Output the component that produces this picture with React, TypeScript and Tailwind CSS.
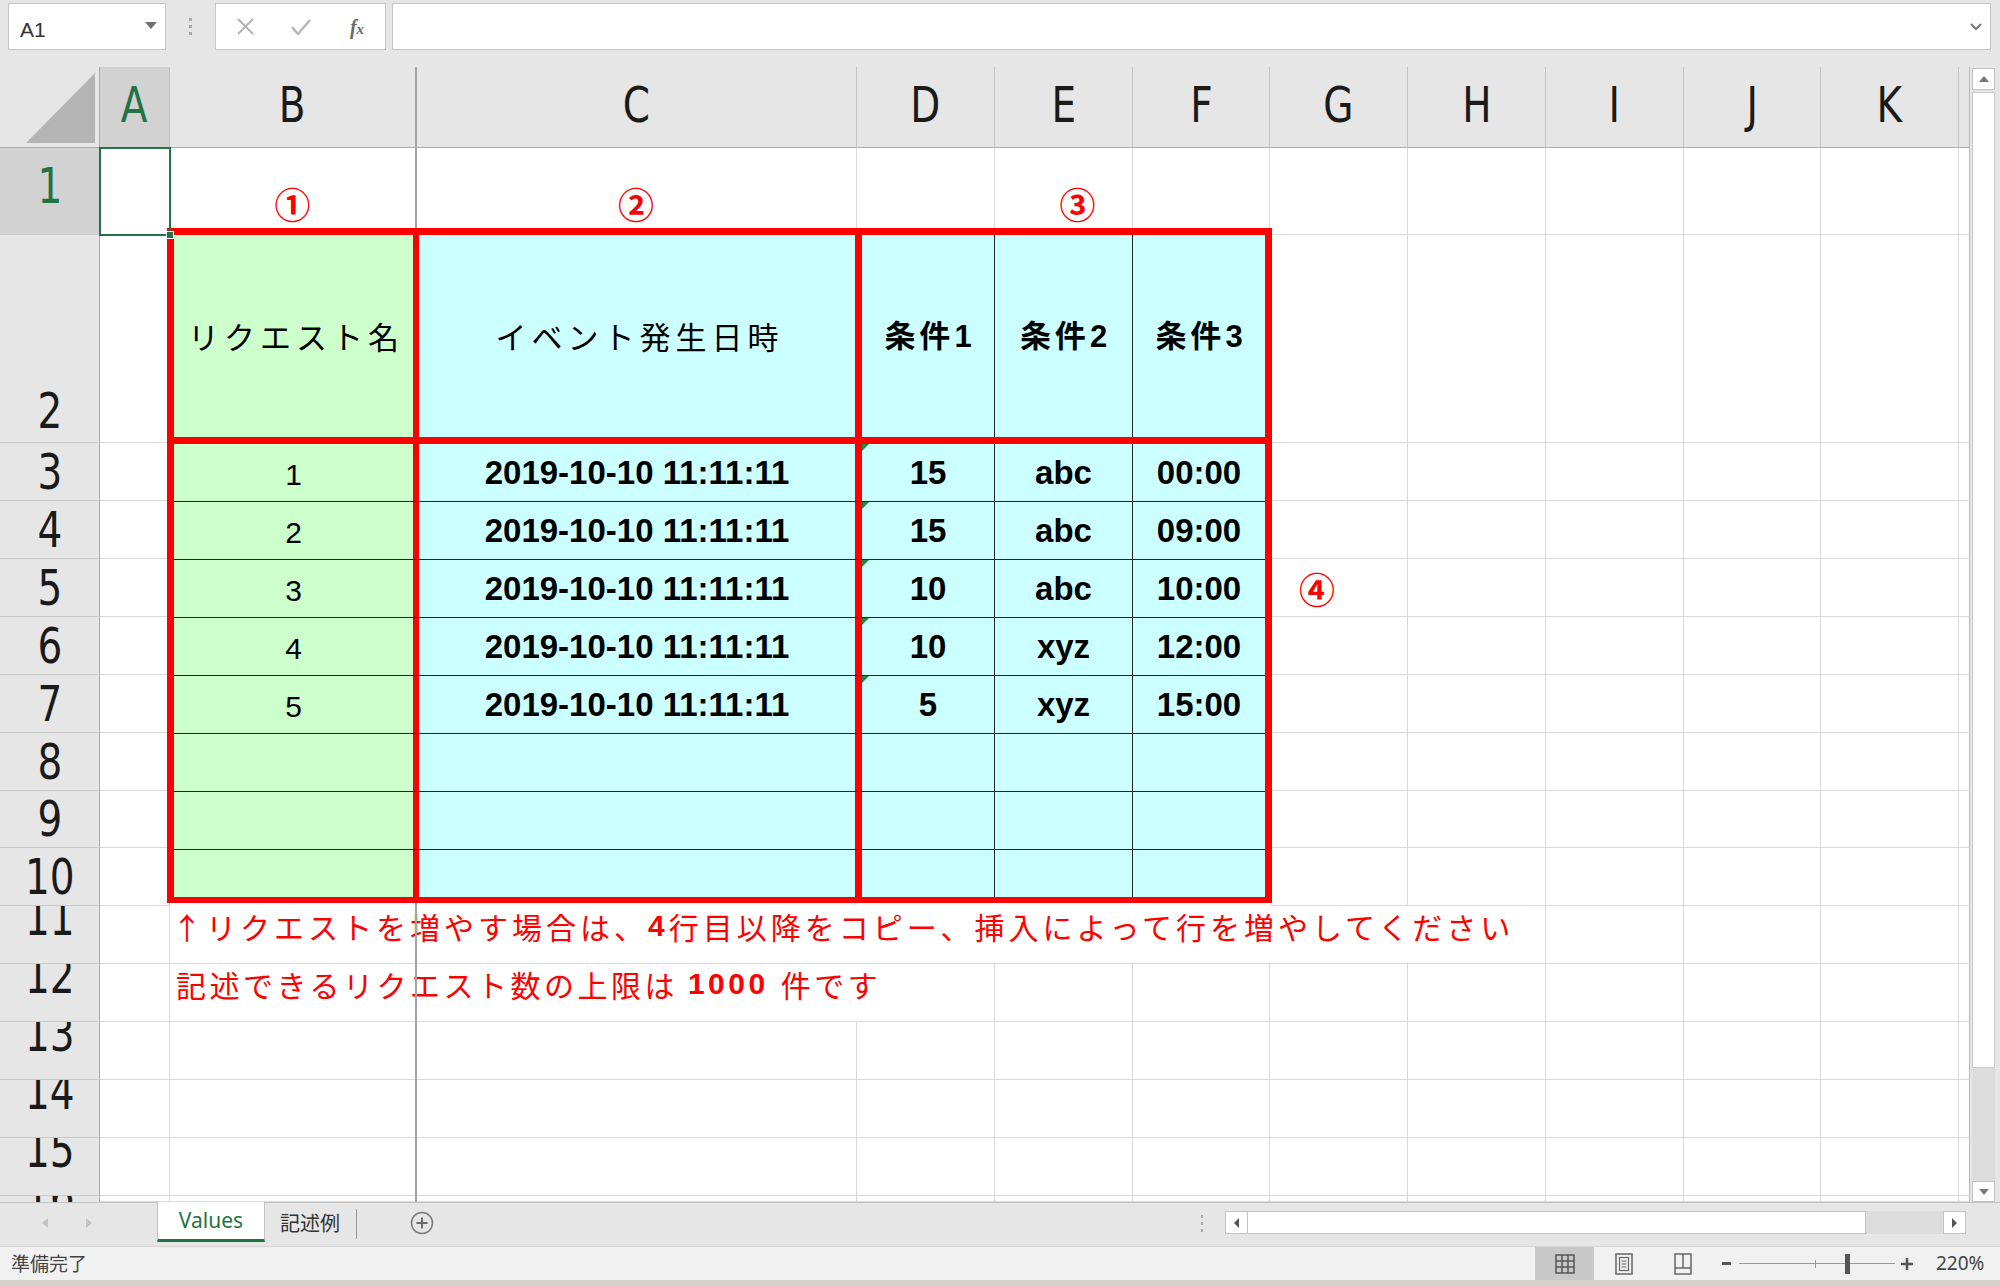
import React from "react";

const jp = "font-['Noto_Sans_CJK_JP','Noto_Sans_CJK_SC',sans-serif]";
const arial = "font-['Liberation_Sans',Arial,sans-serif]";
const dv = "font-['DejaVu_Sans','Liberation_Sans',sans-serif]";
const ui = "font-['Noto_Sans','Noto_Sans_CJK_JP',sans-serif]";

const cell = "border-r border-b border-[#d9d9d9]";
const lastCell = "border-r border-b border-[#d9d9d9] border-r-[#b9b9b9]";
const red = "text-[#ff0000]";

const letters = ["A", "B", "C", "D", "E", "F", "G", "H", "I", "J", "K"];

const data = [
    ["1", "2019-10-10 11:11:11", "15", "abc", "00:00"],
    ["2", "2019-10-10 11:11:11", "15", "abc", "09:00"],
    ["3", "2019-10-10 11:11:11", "10", "abc", "10:00"],
    ["4", "2019-10-10 11:11:11", "10", "xyz", "12:00"],
    ["5", "2019-10-10 11:11:11", "5", "xyz", "15:00"],
    ["", "", "", "", ""],
    ["", "", "", "", ""],
    ["", "", "", "", ""],
];

function HeadText({ children }: { children: React.ReactNode }) {
    return <span className={`inline-block scale-x-[0.78] text-[50px] leading-[50px] ${dv}`}>{children}</span>;
}

function RowHead({ n }: { n: number }) {
    let pos = "items-center";
    if (n === 1) pos = "items-center pb-[10px] bg-[#d2d2d2] text-[#217346]";
    else if (n === 2) pos = "items-end pb-[6px] bg-[#e6e6e6]";
    else if (n >= 11) pos = "items-center pb-[33px] bg-[#e6e6e6]";
    else pos = "items-center bg-[#e6e6e6]";
    return (
        <div className={`flex justify-center overflow-hidden border-r border-b border-r-[#a9a9a9] border-b-[#c9c9c9] text-[#1a1a1a] ${pos}`}>
            <HeadText>{n}</HeadText>
        </div>
    );
}

function Circled({ c }: { c: string }) {
    return <span className={`${jp} font-bold text-[36px] leading-[36px] ${red}`}>{c}</span>;
}

// G..K plus the partial L column
function RightCells({ row, extra }: { row: number; extra?: React.ReactNode }) {
    return (
        <>
            <div className={`${cell} flex items-center pl-[29px]`}>{extra}</div>
            <div className={cell} />
            <div className={cell} />
            <div className={cell} />
            <div className={cell} />
            <div className={lastCell} key={`l${row}`} />
        </>
    );
}

function DataTable() {
    return (
        <div className="col-span-5 row-span-9 relative z-20 -ml-[3px] -mt-[7px] w-[1105px] h-[675px] border-[7px] border-b-[6px] border-[#ff0000] flex flex-col bg-[#ccffff] text-black">
            <div className="flex h-[209px] border-b-[7px] border-[#ff0000]">
                <div className="w-[245px] border-r-[6px] border-[#ff0000] bg-[#ccffcc] flex items-center justify-center">
                    <span className={`${jp} text-[31px] tracking-[5px] -mr-[5px]`}>リクエスト名</span>
                </div>
                <div className="w-[443px] border-r-[7px] border-[#ff0000] flex items-center justify-center">
                    <span className={`${jp} text-[31px] tracking-[5px] -mr-[5px]`}>イベント発生日時</span>
                </div>
                {["1", "2", "3"].map((d, i) => (
                    <div
                        key={d}
                        className={`flex items-center justify-center ${i === 0 ? "w-[133px] border-r border-[#222]" : i === 1 ? "w-[138px] border-r border-[#222]" : "flex-1"}`}
                    >
                        <span className={`${jp} font-bold text-[31px] tracking-[4px]`}>
                            条件<span className={`${arial} tracking-normal`}>{d}</span>
                        </span>
                    </div>
                ))}
            </div>
            {data.map((r, i) => (
                <div key={i} className={`flex ${i < 7 ? "h-[58px] border-b border-[#222]" : "flex-1"}`}>
                    <div className={`w-[245px] border-r-[6px] border-[#ff0000] bg-[#ccffcc] flex items-center justify-center pt-[3px] ${arial} text-[30px]`}>
                        {r[0]}
                    </div>
                    <div className={`w-[443px] border-r-[7px] border-[#ff0000] flex items-center justify-center ${arial} font-bold text-[33px]`}>
                        {r[1]}
                    </div>
                    <div className={`relative w-[133px] border-r border-[#222] flex items-center justify-center ${arial} font-bold text-[33px]`}>
                        {r[2] && <span className="absolute top-0 left-0 w-0 h-0 border-t-[7px] border-r-[7px] border-t-[#1d8a3c] border-r-transparent" />}
                        {r[2]}
                    </div>
                    <div className={`w-[138px] border-r border-[#222] flex items-center justify-center ${arial} font-bold text-[33px]`}>
                        {r[3]}
                    </div>
                    <div className={`flex-1 flex items-center justify-center ${arial} font-bold text-[33px]`}>{r[4]}</div>
                </div>
            ))}
        </div>
    );
}

function Sheet() {
    const rows: React.ReactNode[] = [];

    // column header row
    rows.push(
        <div key="corner" className="relative border-r border-b border-r-[#a9a9a9] border-b-[#a9a9a9] bg-[#e6e6e6]">
            <svg width="100" height="81" className="block">
                <polygon points="95,6 95,76 26,76" fill="#b4b4b4" />
            </svg>
        </div>
    );
    letters.forEach((l) => {
        rows.push(
            <div
                key={`h${l}`}
                className={`flex items-center justify-center pb-[4px] border-r border-b border-r-[#c4c4c4] border-b-[#a9a9a9] ${l === "A" ? "bg-[#d2d2d2] text-[#217346]" : "bg-[#e6e6e6] text-[#1a1a1a]"}`}
            >
                <HeadText>{l}</HeadText>
            </div>
        );
    });
    rows.push(<div key="hL" className="bg-[#e6e6e6] border-b border-r border-b-[#a9a9a9] border-r-[#b9b9b9]" />);

    // row 1
    rows.push(<RowHead key="r1" n={1} />);
    rows.push(
        <div key="a1" className={`${cell} relative`}>
            <div className="absolute -left-px -top-px w-[72px] h-[89px] border-2 border-[#217346] z-30" />
            <div className="absolute left-[66px] top-[83px] w-[8px] h-[8px] bg-[#217346] border border-white z-30" />
        </div>
    );
    rows.push(
        <div key="b1" className={`${cell} flex items-end justify-center pb-[13px]`}>
            <Circled c="①" />
        </div>
    );
    rows.push(
        <div key="c1" className={`${cell} flex items-end justify-center pb-[13px]`}>
            <Circled c="②" />
        </div>
    );
    rows.push(<div key="d1" className={cell} />);
    rows.push(
        <div key="e1" className={`${cell} flex items-end justify-center pl-[28px] pb-[13px]`}>
            <Circled c="③" />
        </div>
    );
    rows.push(<div key="f1" className={cell} />);
    rows.push(<RightCells key="rc1" row={1} />);

    // rows 2..10 with the table
    for (let n = 2; n <= 10; n++) {
        rows.push(<RowHead key={`r${n}`} n={n} />);
        rows.push(<div key={`a${n}`} className={cell} />);
        if (n === 2) rows.push(<DataTable key="table" />);
        rows.push(<RightCells key={`rc${n}`} row={n} extra={n === 5 ? <Circled c="④" /> : undefined} />);
    }

    // row 11
    rows.push(<RowHead key="r11" n={11} />);
    rows.push(<div key="a11" className={cell} />);
    rows.push(
        <div key="b11" className={`col-span-7 border-b border-[#d9d9d9] border-r flex items-start pl-[2px] whitespace-nowrap ${red} ${jp} text-[30px] leading-[40px] tracking-[4px]`}>
            ↑リクエストを増やす場合は、<span className={`${arial} font-bold`}>4</span>行目以降をコピー、挿入によって行を増やしてください
        </div>
    );
    rows.push(<div key="i11" className={cell} />);
    rows.push(<div key="j11" className={cell} />);
    rows.push(<div key="k11" className={cell} />);
    rows.push(<div key="l11" className={lastCell} />);

    // row 12
    rows.push(<RowHead key="r12" n={12} />);
    rows.push(<div key="a12" className={cell} />);
    rows.push(
        <div key="b12" className={`col-span-3 border-b border-r border-[#d9d9d9] flex items-start pl-[6px] whitespace-nowrap ${red} ${jp} text-[30px] leading-[40px] tracking-[3.5px]`}>
            <span>記述できるリクエスト数の上限は</span>
            <span className={`${arial} font-bold ml-[10px] mr-[12px]`}>1000</span>
            <span>件です</span>
        </div>
    );
    ["e", "f", "g", "h", "i", "j", "k"].forEach((c) => rows.push(<div key={`${c}12`} className={cell} />));
    rows.push(<div key="l12" className={lastCell} />);

    // rows 13..16
    for (let n = 13; n <= 16; n++) {
        rows.push(<RowHead key={`r${n}`} n={n} />);
        letters.forEach((l) => rows.push(<div key={`${l}${n}`} className={cell} />));
        rows.push(<div key={`l${n}`} className={lastCell} />);
    }

    return (
        <div className="relative w-[1970px] h-[1135px] bg-white overflow-hidden">
            <div className="grid grid-cols-[100px_70px_246px_441px_138px_138px_137px_138px_138px_138px_137px_138px_11px] grid-rows-[81px_87px_208px_58px_58px_58px_58px_58px_58px_57px_58px_58px_58px_58px_58px_58px_6px] h-full">
                {rows}
            </div>
            {/* frozen pane divider */}
            <div className="absolute left-[415px] top-0 bottom-0 w-[2px] bg-[#a3a3a3] z-10" />
        </div>
    );
}

function VScroll() {
    return (
        <div className="w-[26px] h-[1135px] flex flex-col pl-[2px] pr-[1px] pt-[1px] bg-[#e6e6e6]">
            <div className="h-[22px] bg-white border border-[#c3c3c3] flex items-center justify-center">
                <svg width="10" height="6"><polygon points="0,6 5,0 10,6" fill="#777" /></svg>
            </div>
            <div className="mt-[2px] h-[976px] bg-white border border-[#c8c8c8]" />
            <div className="flex-1 bg-[#dcdcdc]" />
            <div className="h-[21px] bg-white border border-[#c3c3c3] flex items-center justify-center">
                <svg width="10" height="6"><polygon points="0,0 10,0 5,6" fill="#777" /></svg>
            </div>
        </div>
    );
}

function Toolbar() {
    return (
        <div className="h-[67px] flex items-start pt-[3px] bg-[#e6e6e6]">
            <div className="ml-[8px] w-[158px] h-[47px] bg-white border border-[#c6c6c6] flex items-center pl-[11px] pr-[8px] pt-[6px]">
                <span className={`${arial} text-[21px] text-[#333] flex-1`}>A1</span>
                <svg width="12" height="7" className="-mt-[8px]"><polygon points="0,0 12,0 6,7" fill="#6f6f6f" /></svg>
            </div>
            <div className="ml-[23px] w-[3px] h-[47px] flex flex-col items-center justify-center gap-[4px]">
                <span className="w-[3px] h-[3px] bg-[#a8a8a8]" />
                <span className="w-[3px] h-[3px] bg-[#a8a8a8]" />
                <span className="w-[3px] h-[3px] bg-[#a8a8a8]" />
            </div>
            <div className="ml-[23px] w-[171px] h-[47px] bg-white border border-[#c6c6c6] flex items-center pl-[1px]">
                <div className="w-[56px] flex justify-center">
                    <svg width="17" height="17"><path d="M1 1 L16 16 M16 1 L1 16" stroke="#b5b5b5" strokeWidth="2" /></svg>
                </div>
                <div className="w-[56px] flex justify-center">
                    <svg width="20" height="16"><path d="M1 8 L7 15 L19 1" stroke="#b8b8b8" strokeWidth="2.5" fill="none" /></svg>
                </div>
                <div className="w-[56px] flex justify-center">
                    <span className="font-['Liberation_Serif',serif] italic font-bold text-[20px] text-[#6a6a6a]">
                        f<span className="text-[15px]">x</span>
                    </span>
                </div>
            </div>
            <div className="ml-[6px] mr-[9px] flex-1 h-[47px] bg-white border border-[#c6c6c6] flex items-center justify-end pr-[8px]">
                <svg width="12" height="8"><path d="M1 1 L6 6 L11 1" stroke="#777" strokeWidth="2" fill="none" /></svg>
            </div>
        </div>
    );
}

function TabBar() {
    return (
        <div className="h-[44px] flex items-start bg-[#e6e6e6] border-t border-[#c3c3c3]">
            <div className="w-[157px] h-[40px] flex items-center">
                <svg width="6" height="10" className="ml-[42px]"><polygon points="6,0 6,10 0,5" fill="#c3c3c3" /></svg>
                <svg width="6" height="10" className="ml-[38px]"><polygon points="0,0 0,10 6,5" fill="#c3c3c3" /></svg>
            </div>
            <div className={`w-[108px] h-[40px] -mt-px bg-white border-x border-[#c3c3c3] border-b-[3px] border-b-[#217346] flex items-center justify-center ${ui} text-[21px] text-[#217346]`}>
                Values
            </div>
            <div className={`ml-[15px] h-[40px] flex items-center ${jp} text-[20px] text-[#333]`}>記述例</div>
            <div className="ml-[16px] mt-[6px] w-px h-[30px] bg-[#9a9a9a]" />
            <div className="ml-[53px] h-[40px] flex items-center">
                <svg width="24" height="24" viewBox="0 0 24 24">
                    <circle cx="12" cy="12" r="10.5" stroke="#7a7a7a" strokeWidth="1.5" fill="none" />
                    <path d="M12 6.5 V17.5 M6.5 12 H17.5" stroke="#6a6a6a" strokeWidth="2" />
                </svg>
            </div>
            <div className="flex-1" />
            <div className="h-[40px] w-[3px] flex flex-col items-center justify-center gap-[4px]">
                <span className="w-[2px] h-[3px] bg-[#aaa]" />
                <span className="w-[2px] h-[3px] bg-[#aaa]" />
                <span className="w-[2px] h-[3px] bg-[#aaa]" />
            </div>
            <div className="ml-[22px] mr-[34px] mt-[8px] w-[741px] h-[23px] flex">
                <div className="w-[23px] bg-white border border-[#c3c3c3] flex items-center justify-center">
                    <svg width="5" height="10"><polygon points="5,0 5,10 0,5" fill="#555" /></svg>
                </div>
                <div className="w-[618px] bg-white border-y border-r border-[#c3c3c3]" />
                <div className="flex-1 bg-[#dcdcdc]" />
                <div className="w-[23px] bg-white border border-[#c3c3c3] flex items-center justify-center">
                    <svg width="5" height="10"><polygon points="0,0 0,10 5,5" fill="#555" /></svg>
                </div>
            </div>
        </div>
    );
}

function StatusBar() {
    return (
        <div className="h-[34px] flex items-stretch bg-[#f1f1f1] border-t border-[#d6d6d6]">
            <div className={`flex-1 flex items-center pl-[11px] ${jp} text-[19px] text-[#444]`}>準備完了</div>
            <div className="w-[59px] bg-[#c8c8c8] flex items-center justify-center">
                <svg width="20" height="20" viewBox="0 0 20 20">
                    <rect x="1" y="1" width="18" height="18" fill="none" stroke="#555" strokeWidth="1.5" />
                    <path d="M7 1 V19 M13 1 V19 M1 7 H19 M1 13 H19" stroke="#555" strokeWidth="1.5" />
                </svg>
            </div>
            <div className="w-[59px] flex items-center justify-center">
                <svg width="18" height="22" viewBox="0 0 18 22">
                    <rect x="1" y="1" width="16" height="20" fill="none" stroke="#666" strokeWidth="1.5" />
                    <rect x="4.5" y="4.5" width="9" height="13" fill="none" stroke="#666" strokeWidth="1.2" />
                    <path d="M6.5 8 H11.5 M6.5 11 H11.5 M6.5 14 H11.5" stroke="#666" strokeWidth="1" />
                </svg>
            </div>
            <div className="w-[59px] flex items-center justify-center">
                <svg width="18" height="22" viewBox="0 0 18 22">
                    <rect x="1" y="1" width="16" height="20" fill="none" stroke="#666" strokeWidth="1.5" />
                    <path d="M9 1 V15 M1 15 H17" stroke="#666" strokeWidth="1.5" />
                </svg>
            </div>
            <div className="flex items-center pl-[10px]">
                <span className="w-[9px] h-[3px] bg-[#555]" />
                <div className="relative ml-[8px] w-[156px] h-[20px] flex items-center">
                    <div className="w-full h-px bg-[#999]" />
                    <div className="absolute left-[76px] top-[6px] w-px h-[8px] bg-[#999]" />
                    <div className="absolute left-[106px] top-0 w-[5px] h-[20px] bg-[#555]" />
                </div>
                <svg width="12" height="12" className="ml-[6px]"><path d="M6 0 V12 M0 6 H12" stroke="#555" strokeWidth="2.5" /></svg>
                <span className={`ml-[23px] w-[64px] ${ui} text-[19px] text-[#444]`}>220%</span>
            </div>
        </div>
    );
}

export default function App() {
    return (
        <div className="w-[2000px] h-[1286px] overflow-hidden bg-[#e6e6e6] flex flex-col select-none">
            <Toolbar />
            <div className="flex h-[1135px]">
                <Sheet />
                <VScroll />
                <div className="flex-1" />
            </div>
            <TabBar />
            <StatusBar />
            <div className="h-[6px] bg-[#d6d2ca]" />
        </div>
    );
}
